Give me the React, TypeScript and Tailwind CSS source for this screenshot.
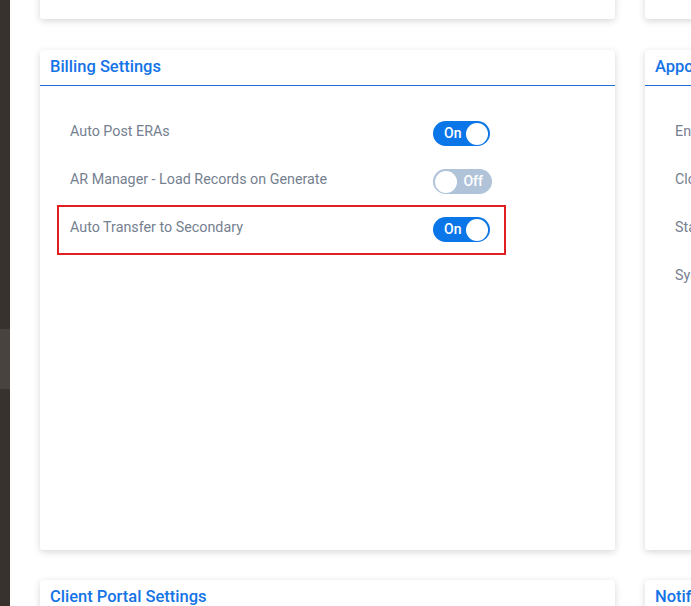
import React from "react";

function Toggle({ on }: { on: boolean }) {
  if (on) {
    return (
      <div className="flex h-[25px] w-[57px] shrink-0 items-center justify-between rounded-full bg-[#0a76e8] pl-[11px] pr-[2px]">
        <span className="text-[14px] font-medium leading-[25px] text-white">On</span>
        <span className="h-[22px] w-[22px] rounded-full bg-white" />
      </div>
    );
  }
  return (
    <div className="flex h-[25px] w-[59px] shrink-0 items-center justify-between rounded-full bg-[#b0c3d9] pl-[2px] pr-[9px]">
      <span className="h-[22px] w-[22px] rounded-full bg-white" />
      <span className="text-[14px] font-medium leading-[25px] text-white">Off</span>
    </div>
  );
}

type Row = { label: string; on: boolean; highlight?: boolean };

function Card({ title, rows, className = "" }: { title: string; rows: Row[]; className?: string }) {
  return (
    <div className={"flex h-[500px] flex-col rounded-[3px] bg-white shadow-[0_2px_7px_rgba(0,0,0,0.16)] " + className}>
      <div className="flex h-[36px] shrink-0 items-center whitespace-nowrap border-b border-[#1c6fd6] px-[10px] text-[16.5px] font-medium text-[#1473e6]">
        {title}
      </div>
      <div className="flex w-[483px] flex-col px-[17px] pt-[23px]">
        {rows.map((r, i) => (
          <div
            key={i}
            className={
              "flex h-[48px] items-start justify-between border-2 pl-[11px] pr-[12px] pt-[10px] " +
              (r.highlight ? "h-[50px] border-[#e0201f]" : "border-transparent")
            }
          >
            <span className="whitespace-nowrap text-[14.3px] leading-[20px] text-[#767f90]">{r.label}</span>
            <div className="flex w-[59px] shrink-0 justify-start">
              <Toggle on={r.on} />
            </div>
          </div>
        ))}
      </div>
    </div>
  );
}

export default function App() {
  return (
    <div
      className="flex h-[606px] w-[691px] overflow-hidden bg-white"
      style={{ fontFamily: "Roboto, 'Noto Sans', sans-serif" }}
    >
      <div className="flex w-[10px] shrink-0 flex-col bg-[#37322e]">
        <div className="h-[329px]" />
        <div className="h-[60px] bg-[#48433f]" />
      </div>
      <div className="flex min-w-0 flex-1 flex-col gap-[30px] pl-[30px] -mt-[80px]">
        <div className="mb-[1px] flex gap-[30px]">
          <div className="h-[99px] w-[575px] shrink-0 rounded-[3px] bg-white shadow-[0_2px_7px_rgba(0,0,0,0.16)]" />
          <div className="h-[99px] w-[575px] shrink-0 rounded-[3px] bg-white shadow-[0_2px_7px_rgba(0,0,0,0.16)]" />
        </div>
        <div className="flex gap-[30px]">
          <Card
            className="w-[575px] shrink-0"
            title="Billing Settings"
            rows={[
              { label: "Auto Post ERAs", on: true },
              { label: "AR Manager - Load Records on Generate", on: false },
              { label: "Auto Transfer to Secondary", on: true, highlight: true },
            ]}
          />
          <Card
            className="w-[575px] shrink-0"
            title="Appointment Settings"
            rows={[
              { label: "Enable Online Booking", on: true },
              { label: "Close Appointments Automatically", on: true },
              { label: "Status Reminders", on: false },
              { label: "Sync Calendar", on: true },
            ]}
          />
        </div>
        <div className="flex gap-[30px]">
          <Card className="w-[575px] shrink-0" title="Client Portal Settings" rows={[]} />
          <Card className="w-[575px] shrink-0" title="Notifications" rows={[]} />
        </div>
      </div>
    </div>
  );
}
